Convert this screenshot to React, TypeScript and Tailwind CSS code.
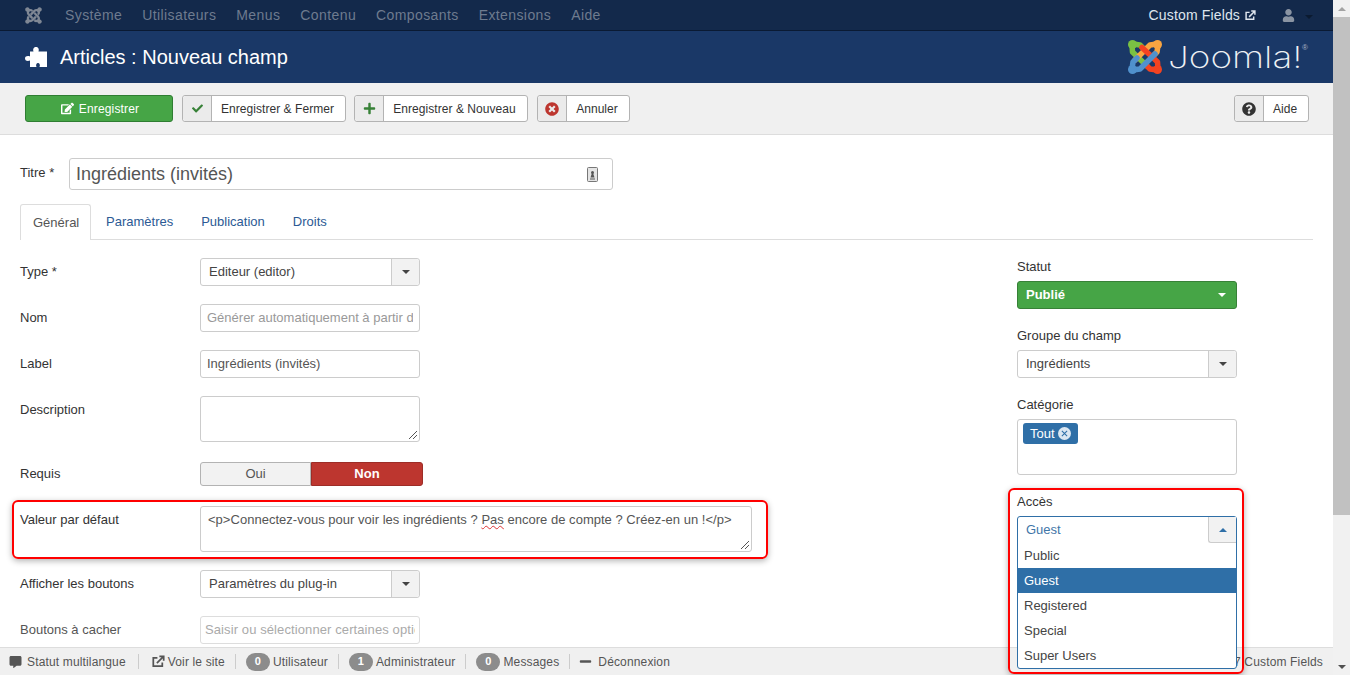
import {
  FaCheck,
  FaCommentAlt,
  FaEdit,
  FaJoomla,
  FaMinus,
  FaPlus,
  FaQuestionCircle,
  FaTimesCircle,
  FaUser,
} from "react-icons/fa";

const NAV_ITEMS = ["Système", "Utilisateurs", "Menus", "Contenu", "Composants", "Extensions", "Aide"];
const ACCESS_OPTIONS = ["Public", "Guest", "Registered", "Special", "Super Users"];

function ExternalIcon({ className }: { className?: string }) {
  return (
    <svg viewBox="0 0 12 12" className={className} fill="none" stroke="currentColor" strokeWidth="1.6">
      <path d="M9.5 7v3.2H1.2V2.6H5" />
      <path d="M4.5 7.5 10 2M6.8 1.2h4v4" />
    </svg>
  );
}

function PuzzleIcon() {
  return (
    <svg viewBox="0 0 22 20" className="h-5 w-[22px]" fill="currentColor">
      <path d="M5 4.5H8.5C7.5 2 9 0 11 0C13 0 14.5 2 13.5 4.5H22V20H14.5C15.5 18 14.5 16 13 16C11.5 16 10.5 18 11.5 20H5V13.5C3 14.5 0 14 0 11.5C0 9 3 8.5 5 9.5Z" />
    </svg>
  );
}

function JoomlaMark() {
  return (
    <svg viewBox="0 0 36 36" className="h-9 w-9" fill="none" strokeLinecap="round" strokeLinejoin="round" strokeWidth="5.5">
      <path d="M5 6 L5.5 13 L20 27" stroke="#7ac143" />
      <path d="M6 5 L13 6 L17 10" stroke="#7ac143" />
      <circle cx="5.5" cy="5.5" r="4.5" fill="#7ac143" />
      <path d="M30 5 L23 6 L8 21" stroke="#f9a541" />
      <path d="M31 6 L30 13 L26 17" stroke="#f9a541" />
      <circle cx="30.5" cy="5.5" r="4.5" fill="#f9a541" />
      <path d="M31 30 L30.5 23 L15 8.5" stroke="#f44321" />
      <path d="M30 31 L23 30 L19 26" stroke="#f44321" />
      <circle cx="30.5" cy="30.5" r="4.5" fill="#f44321" />
      <path d="M6 31 L13 30 L28 15" stroke="#5091cd" />
      <path d="M5 30 L6 23 L10 19" stroke="#5091cd" />
      <circle cx="5.5" cy="30.5" r="4.5" fill="#5091cd" />
    </svg>
  );
}

function ToolbarButton({
  icon,
  label,
  width,
}: {
  icon: React.ReactNode;
  label: string;
  width: string;
}) {
  return (
    <div className={`flex h-[27px] ${width} rounded-[3px] border border-[#b3b3b3] bg-white text-xs tracking-[0.05px] text-[#333]`}>
      <span className="flex w-[29px] shrink-0 items-center justify-center rounded-l-[3px] border-r border-[#b3b3b3] bg-[#ebebeb]">
        {icon}
      </span>
      <span className="flex flex-1 items-center justify-center pr-[2px]">{label}</span>
    </div>
  );
}

function Row({
  label,
  className,
  labelClass,
  children,
}: {
  label: string;
  className?: string;
  labelClass?: string;
  children: React.ReactNode;
}) {
  return (
    <div className={`flex ${className ?? ""}`}>
      <label className={`w-[180px] shrink-0 leading-[18px] ${labelClass ?? "pt-[5px]"}`}>{label}</label>
      {children}
    </div>
  );
}

function Select({ value }: { value: string }) {
  return (
    <div className="flex h-7 w-[220px] rounded-[3px] border border-[#ccc] bg-white">
      <span className="flex-1 truncate pl-2 leading-[26px] text-[#444]">{value}</span>
      <span className="flex w-7 items-center justify-center rounded-r-[3px] border-l border-[#ccc] bg-[#f2f2f2]">
        <span className="h-0 w-0 border-x-4 border-t-[4px] border-x-transparent border-t-[#444]" />
      </span>
    </div>
  );
}

function Resizer() {
  return (
    <svg viewBox="0 0 8 8" className="absolute bottom-[2px] right-[2px] h-2 w-2" stroke="#555" strokeWidth="1">
      <path d="M0 8 8 0M4 8 8 4" />
    </svg>
  );
}

function FooterItem({ count, label }: { count: string; label: string }) {
  return (
    <span className="flex items-center gap-[3px]">
      <span className="flex h-[18px] w-[24px] items-center justify-center rounded-full bg-[#8c8c8c] text-[11px] font-bold text-white">
        {count}
      </span>
      {label}
    </span>
  );
}

export default function App() {
  return (
    <div className="relative flex h-[675px] w-[1350px] overflow-hidden bg-white font-['Liberation_Sans',sans-serif] text-[13px] text-[#333]">
      <div className="relative flex w-[1333px] flex-col">
        {/* top nav */}
        <nav className="flex h-[31px] shrink-0 items-center border-b border-[#0a1a33] bg-[#13294b] pl-[24px] pr-[20px] text-sm">
          <FaJoomla className="h-[19px] w-[19px] text-[#7f8794]" />
          <div className="ml-[22px] flex gap-[20px] tracking-[0.4px] text-[#6e7b8f]">
            {NAV_ITEMS.map((item) => (
              <span key={item}>{item}</span>
            ))}
          </div>
          <span className="ml-auto flex items-center gap-[5px] tracking-[0.15px] text-[#dfe5ee]">
            Custom Fields
            <ExternalIcon className="h-[11px] w-[11px]" />
          </span>
          <FaUser className="ml-[26px] h-[13px] w-[13px] text-[#8a94a3]" />
          <span className="ml-[10px] mt-1 h-0 w-0 border-x-4 border-t-4 border-x-transparent border-t-[#0b1a30]" />
        </nav>

        {/* page title */}
        <header className="flex h-[52px] shrink-0 items-center bg-[#1a3867] pl-[25px] pr-[25px] text-white">
          <PuzzleIcon />
          <h1 className="ml-[13px] text-xl">Articles : Nouveau champ</h1>
          <div className="ml-auto flex items-center">
            <JoomlaMark />
            <span className="ml-[5px] w-[134px] origin-left scale-x-[1.23] font-['Inter',sans-serif] text-[30px] font-extralight leading-none text-[#eef1f5]">
              Joomla!
            </span>
            <span className="mb-[18px] w-[6px] text-[8px] leading-none text-[#aab4c4]">®</span>
          </div>
        </header>

        {/* toolbar */}
        <div className="flex h-[52px] shrink-0 items-center border-b border-[#ddd] bg-[#f0f0f0] pl-[25px] pr-[24px]">
          <div className="flex h-[27px] w-[148px] items-center justify-center gap-[5px] rounded-[3px] border border-[#2f7d32] bg-[#46a546] pl-[2px] text-xs tracking-[0.15px] text-white">
            <FaEdit className="h-[13px] w-[13px]" />
            Enregistrer
          </div>
          <div className="ml-[9px]">
            <ToolbarButton width="w-[164px]" label="Enregistrer & Fermer" icon={<FaCheck className="h-[11px] w-[11px] text-[#378137]" />} />
          </div>
          <div className="ml-2">
            <ToolbarButton width="w-[174px]" label="Enregistrer & Nouveau" icon={<FaPlus className="h-[13px] w-[13px] text-[#378137]" />} />
          </div>
          <div className="ml-[9px]">
            <ToolbarButton width="w-[93px]" label="Annuler" icon={<FaTimesCircle className="h-[14px] w-[14px] text-[#bd362f]" />} />
          </div>
          <div className="ml-auto">
            <ToolbarButton width="w-[75px]" label="Aide" icon={<FaQuestionCircle className="h-[14px] w-[14px] text-[#333]" />} />
          </div>
        </div>

        {/* form */}
        <main className="flex-1 px-5 pt-[23px]">
          <div className="flex items-center">
            <label className="w-[49px] pb-[3px]">Titre *</label>
            <div className="flex h-[32px] w-[544px] items-center justify-between rounded-[3px] border border-[#ccc] pl-[6px] pr-[14px] text-lg text-[#555]">
              Ingrédients (invités)
              <svg viewBox="0 0 11 15" className="h-[15px] w-[11px]">
                <rect x="0.5" y="0.5" width="10" height="14" rx="1" fill="#e4e4e4" stroke="#777" />
                <circle cx="5.5" cy="5.5" r="1.5" fill="#555" />
                <path d="M3.5 10.5 4.8 6.5h1.4l1.3 4zM3 11.5h5v1H3z" fill="#555" />
              </svg>
            </div>
          </div>

          <div className="mt-[14px] flex h-9 w-[1293px] border-b border-[#ddd]">
            <span className="h-9 w-[71px] rounded-t-[3px] border-x border-t border-[#ddd] bg-white pl-[12px] pt-[10px] leading-[15px] text-[#555]">Général</span>
            <div className="flex gap-[28px] pl-[15px] pt-[10px] leading-[15px] text-[#2c5a94]">
              <span>Paramètres</span>
              <span>Publication</span>
              <span>Droits</span>
            </div>
          </div>

          <div className="mt-[18px] flex">
            <div className="flex w-[997px] flex-col gap-[18px]">
              <Row label="Type *">
                <Select value="Editeur (editor)" />
              </Row>
              <Row label="Nom">
                <input
                  readOnly
                  placeholder="Générer automatiquement à partir du titre"
                  className="h-7 w-[220px] rounded-[3px] border border-[#ccc] px-[6px] pb-[2px] placeholder:text-[#999]"
                />
              </Row>
              <Row label="Label">
                <input
                  readOnly
                  value="Ingrédients (invités)"
                  className="h-7 w-[220px] rounded-[3px] border border-[#ccc] px-[6px] pb-[2px] text-[#555]"
                />
              </Row>
              <Row label="Description">
                <div className="relative h-[46px] w-[220px] rounded-[3px] border border-[#ccc]">
                  <Resizer />
                </div>
              </Row>
              <Row label="Requis" className="mt-[2px]" labelClass="pt-[3px]">
                <div className="flex h-6 w-[223px] text-center leading-[21px]">
                  <span className="w-[111px] rounded-l-[3px] border border-[#b3b3b3] bg-[#f2f2f2] text-[#555]">Oui</span>
                  <span className="flex-1 rounded-r-[3px] border border-[#9d2d27] bg-[#bd362f] font-bold text-white">Non</span>
                </div>
              </Row>
              <Row label="Valeur par défaut" className="mt-[2px]">
                <div className="relative h-[46px] w-[552px] rounded-[3px] border border-[#ccc] px-[7px] pt-[4px] leading-[18px] tracking-[0.02px] text-[#555]">
                  &lt;p&gt;Connectez-vous pour voir les ingrédients ?{" "}
                  <span className="underline decoration-wavy decoration-[#d33] decoration-1">Pas</span> encore de compte ? Créez-en un !&lt;/p&gt;
                  <Resizer />
                </div>
              </Row>
              <Row label="Afficher les boutons">
                <Select value="Paramètres du plug-in" />
              </Row>
              <Row label="Boutons à cacher" labelClass="pt-[5px] text-[#555]">
                <input
                  readOnly
                  placeholder="Saisir ou sélectionner certaines options"
                  className="h-7 w-[220px] rounded-[3px] border border-[#ddd] px-[4px] pb-[2px] tracking-[0.1px] placeholder:text-[#aaa]"
                />
              </Row>
            </div>

            {/* sidebar */}
            <aside className="-mt-[1px] w-[220px]">
              <label className="block h-[24px] pt-[1px] leading-[18px]">Statut</label>
              <div className="flex h-7 items-center justify-between rounded-[3px] border border-[#378137] bg-[#46a546] pl-2 pr-[10px] font-bold text-white">
                Publié
                <span className="h-0 w-0 border-x-4 border-t-4 border-x-transparent border-t-white" />
              </div>
              <label className="mt-[17px] block h-[24px] pt-[1px] leading-[18px]">Groupe du champ</label>
              <Select value="Ingrédients" />
              <label className="mt-[17px] block h-[24px] pt-[1px] leading-[18px]">Catégorie</label>
              <div className="h-[56px] rounded-[3px] border border-[#ccc] p-[3px_5px]">
                <span className="inline-flex h-[21px] items-center gap-[3px] rounded-[3px] bg-[#2f6fa7] px-[7px] text-white">
                  Tout
                  <span className="flex h-[13px] w-[13px] items-center justify-center rounded-full bg-[#dbe7f2] text-[#2f6fa7]">
                    <svg viewBox="0 0 8 8" className="h-[7px] w-[7px]" stroke="currentColor" strokeWidth="1.2">
                      <path d="M1 1 7 7M7 1 1 7" />
                    </svg>
                  </span>
                </span>
              </div>
              <label className="mt-[17px] block h-[24px] pt-[1px] leading-[18px]">Accès</label>
            </aside>
          </div>
        </main>

        {/* status bar */}
        <footer className="absolute inset-x-0 bottom-0 flex h-[28px] items-center border-t border-[#ddd] bg-[#f0f0f0] pl-[9px] pr-[10px] text-xs tracking-[0.15px] text-[#555]">
          <FaCommentAlt className="mr-[5px] h-[12px] w-[13px] text-[#555]" />
          Statut multilangue
          <span className="ml-[12px] mr-[13px] h-[15px] w-px bg-[#ccc]" />
          <ExternalIcon className="mr-[3px] h-[13px] w-[13px]" />
          Voir le site
          <span className="ml-[10px] mr-[10px] h-[15px] w-px bg-[#ccc]" />
          <FooterItem count="0" label="Utilisateur" />
          <span className="ml-[10px] mr-[10px] h-[15px] w-px bg-[#ccc]" />
          <FooterItem count="1" label="Administrateur" />
          <span className="ml-[10px] mr-[10px] h-[15px] w-px bg-[#ccc]" />
          <FooterItem count="0" label="Messages" />
          <span className="ml-[10px] mr-[9px] h-[15px] w-px bg-[#ccc]" />
          <FaMinus className="mr-[6px] h-[13px] w-[13px] text-[#555]" />
          Déconnexion
          <span className="ml-auto">7 Custom Fields</span>
        </footer>

        {/* open Accès dropdown */}
        <div className="absolute left-[1017px] top-[516px] z-10 h-[153px] w-[220px] rounded-[3px] border border-[#2f6fa7] bg-white">
          <div className="flex h-[26px]">
            <span className="flex-1 pl-2 leading-[26px] text-[#3f76a8]">Guest</span>
            <span className="flex w-7 items-center justify-center rounded-bl-[3px] border-b border-l border-[#ccc] bg-[#f2f2f2]">
              <span className="h-0 w-0 border-x-4 border-b-4 border-x-transparent border-b-[#2f6fa7]" />
            </span>
          </div>
          {ACCESS_OPTIONS.map((opt) => (
            <div
              key={opt}
              className={`h-[25px] pl-[6px] leading-[25px] ${opt === "Guest" ? "bg-[#2f6fa7] text-white" : "text-[#444]"}`}
            >
              {opt}
            </div>
          ))}
        </div>

        {/* red annotations from the screenshot */}
        <div className="pointer-events-none absolute left-[12px] top-[500px] h-[59px] w-[756px] rounded-[6px] border-2 border-[#f00] shadow-[0_2px_6px_rgba(0,0,0,0.3)]" />
        <div className="pointer-events-none absolute left-[1008px] top-[488px] z-20 h-[186px] w-[236px] rounded-[6px] border-2 border-[#f00] shadow-[0_2px_6px_rgba(0,0,0,0.3)]" />
      </div>

      {/* scrollbar */}
      <div className="flex w-[17px] flex-col items-center bg-[#f1f1f1]">
        <div className="flex h-[17px] items-center">
          <span className="h-0 w-0 border-x-[4px] border-b-[4px] border-x-transparent border-b-[#a3a3a3]" />
        </div>
        <div className="h-[498px] w-full bg-[#c1c1c1]" />
        <div className="mt-auto flex h-[17px] items-center">
          <span className="h-0 w-0 border-x-[4px] border-t-[4px] border-x-transparent border-t-[#505050]" />
        </div>
      </div>
    </div>
  );
}
